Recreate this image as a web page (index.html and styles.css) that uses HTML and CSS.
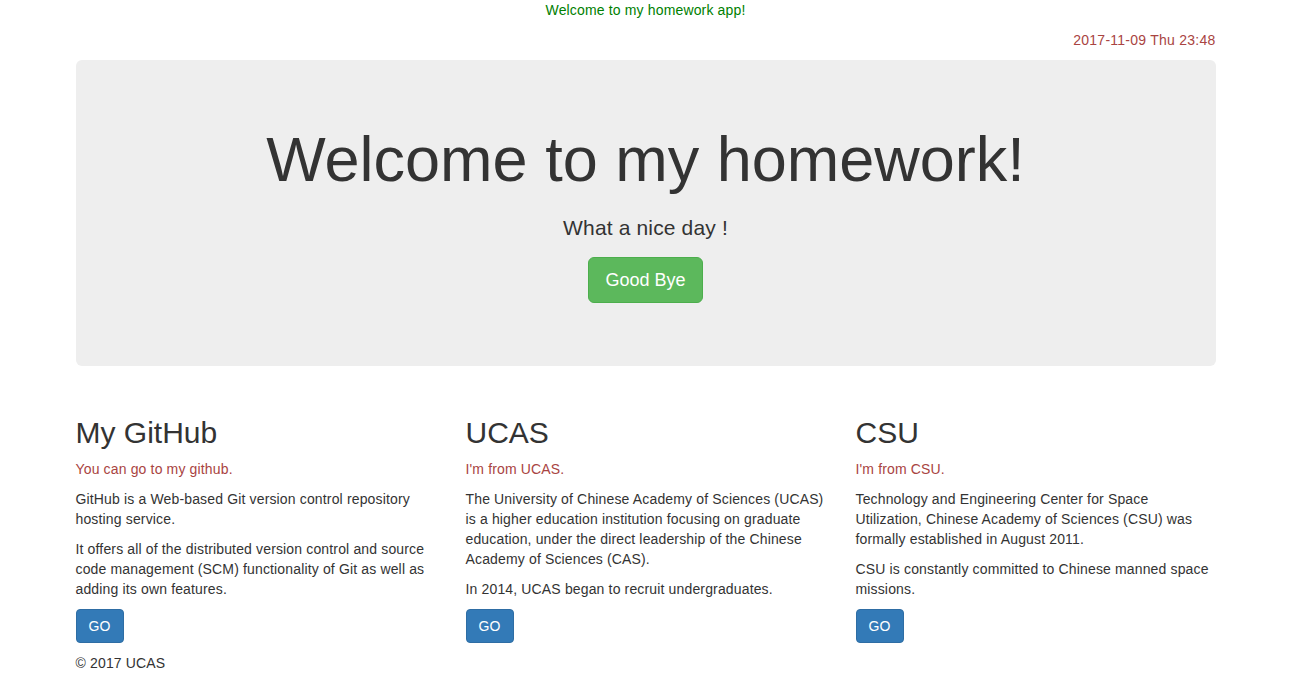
FILE: index.html
```html
<!DOCTYPE html>
<html lang="en">
<head>
<meta charset="utf-8">
<title>Homework</title>
<link rel="stylesheet" href="styles.css">
</head>
<body>
<p class="welcome">Welcome to my homework app!</p>
<div class="container">
  <p class="date">2017-11-09 Thu 23:48</p>
  <div class="jumbotron">
    <h1>Welcome to my homework!</h1>
    <p class="lead lead-sub">What a nice day !</p>
    <p class="lead"><a class="btn btn-lg btn-success" href="#">Good Bye</a></p>
  </div>
  <div class="row">
    <div class="col">
      <h2>My GitHub</h2>
      <p class="text-danger">You can go to my github.</p>
      <p>GitHub is a Web-based Git version control repository hosting service.</p>
      <p>It offers all of the distributed version control and source code management (SCM) functionality of Git as well as adding its own features.</p>
      <p><a class="btn btn-primary" href="#">GO</a></p>
    </div>
    <div class="col">
      <h2>UCAS</h2>
      <p class="text-danger">I'm from UCAS.</p>
      <p>The University of Chinese Academy of Sciences (UCAS) is a higher education institution focusing on graduate education, under the direct leadership of the Chinese Academy of Sciences (CAS).</p>
      <p>In 2014, UCAS began to recruit undergraduates.</p>
      <p><a class="btn btn-primary" href="#">GO</a></p>
    </div>
    <div class="col">
      <h2>CSU</h2>
      <p class="text-danger">I'm from CSU.</p>
      <p>Technology and Engineering Center for Space Utilization, Chinese Academy of Sciences (CSU) was formally established in August 2011.</p>
      <p>CSU is constantly committed to Chinese manned space missions.</p>
      <p><a class="btn btn-primary" href="#">GO</a></p>
    </div>
  </div>
  <footer class="footer">
    <p>&copy; 2017 UCAS</p>
  </footer>
</div>
</body>
</html>
```

FILE: styles.css
```css
* {
  box-sizing: border-box;
}

html, body {
  margin: 0;
  padding: 0;
}

body {
  font-family: "Liberation Sans", Arial, Helvetica, sans-serif;
  font-size: 14px;
  line-height: 20px;
  letter-spacing: 0.15px;
  color: #333;
  background: #fff;
}

p {
  margin: 0 0 10px;
}

.welcome {
  text-align: center;
  color: #008000;
  margin: 0 0 10px;
}

.container {
  width: 1170px;
  margin: 0 auto;
  padding: 0 15px;
}

.date {
  text-align: right;
  color: #a94442;
  letter-spacing: 0.25px;
}

.jumbotron {
  background: #eee;
  border-radius: 6px;
  padding: 48px 60px;
  margin-bottom: 30px;
  text-align: center;
  letter-spacing: 0;
}

.jumbotron h1 {
  font-size: 63px;
  font-weight: 500;
  line-height: 1.1;
  margin: 17px 0 19px;
}

.jumbotron .lead {
  font-size: 21px;
  line-height: 30px;
  font-weight: 200;
  margin-bottom: 15px;
  letter-spacing: 0.15px;
}

.jumbotron .lead-sub {
  margin-bottom: 14px;
}

.btn {
  display: inline-block;
  text-decoration: none;
  border: 1px solid transparent;
  font-weight: 400;
  text-align: center;
  vertical-align: middle;
}

.btn-lg {
  font-size: 18px;
  line-height: 24px;
  padding: 10px 16px;
  border-radius: 6px;
  letter-spacing: 0;
}

.btn-success {
  color: #fff;
  background: #5cb85c;
  border-color: #4cae4c;
}

.btn-primary {
  color: #fff;
  background: #337ab7;
  border-color: #2e6da4;
  font-size: 14px;
  line-height: 20px;
  padding: 6px 12px;
  border-radius: 4px;
}

.row {
  display: flex;
  margin: 0 -15px;
}

.col {
  width: 390px;
  padding: 0 15px;
}

.col h2 {
  font-size: 30px;
  font-weight: 500;
  line-height: 33px;
  margin: 20px 0 10px;
  letter-spacing: 0;
}

.text-danger {
  color: #a94442;
}

.footer p {
  margin: 0;
}
```
